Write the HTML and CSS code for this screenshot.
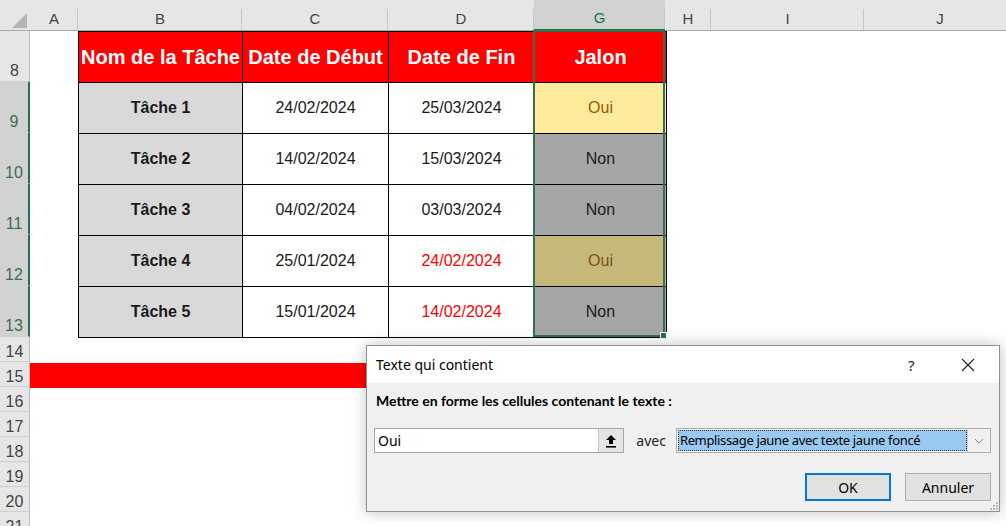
FILE: index.html
```html
<!DOCTYPE html>
<html lang="fr">
<head>
    <meta charset="UTF-8">
    <title>Texte qui contient</title>
    <link rel="stylesheet" href="styles.css">
</head>
<body>
<div class="sheet">
    <div class="colhead">
        <div class="corner">
            <svg width="30" height="31" viewBox="0 0 30 31"><polygon points="27,13 27,28 12,28" fill="#b4b4b4"/></svg>
        </div>
        <div class="ch w-a">A</div>
        <div class="ch w-b">B</div>
        <div class="ch w-c">C</div>
        <div class="ch w-d">D</div>
        <div class="ch w-g sel">G</div>
        <div class="ch w-h">H</div>
        <div class="ch w-i">I</div>
        <div class="ch w-j">J</div>
    </div>

    <div class="grid-body">
        <div class="rowhead">
            <div class="rh tall">8</div>
            <div class="rh tall sel">9</div>
            <div class="rh tall sel">10</div>
            <div class="rh tall sel">11</div>
            <div class="rh tall sel">12</div>
            <div class="rh tall sel">13</div>
            <div class="rh">14</div>
            <div class="rh">15</div>
            <div class="rh">16</div>
            <div class="rh">17</div>
            <div class="rh">18</div>
            <div class="rh">19</div>
            <div class="rh">20</div>
            <div class="rh">21</div>
        </div>

        <div class="cells">
            <table class="tasks">
                <colgroup>
                    <col class="c-b"><col class="c-c"><col class="c-d"><col class="c-g">
                </colgroup>
                <tr class="head">
                    <th>Nom de la Tâche</th>
                    <th>Date de Début</th>
                    <th>Date de Fin</th>
                    <th>Jalon</th>
                </tr>
                <tr>
                    <td class="name">Tâche 1</td>
                    <td>24/02/2024</td>
                    <td>25/03/2024</td>
                    <td class="oui">Oui</td>
                </tr>
                <tr>
                    <td class="name">Tâche 2</td>
                    <td>14/02/2024</td>
                    <td>15/03/2024</td>
                    <td class="non">Non</td>
                </tr>
                <tr>
                    <td class="name">Tâche 3</td>
                    <td>04/02/2024</td>
                    <td>03/03/2024</td>
                    <td class="non">Non</td>
                </tr>
                <tr>
                    <td class="name">Tâche 4</td>
                    <td>25/01/2024</td>
                    <td class="late">24/02/2024</td>
                    <td class="oui dim">Oui</td>
                </tr>
                <tr>
                    <td class="name">Tâche 5</td>
                    <td>15/01/2024</td>
                    <td class="late">14/02/2024</td>
                    <td class="non">Non</td>
                </tr>
            </table>
            <div class="row"></div>
            <div class="row band"></div>
            <div class="row"></div>
            <div class="row"></div>
            <div class="row"></div>
            <div class="row"></div>
            <div class="row"></div>
            <div class="row"></div>
        </div>
    </div>

    <div class="selection"><span class="handle"></span></div>

    <div class="dialog">
        <div class="titlebar">
            <span class="title">Texte qui contient</span>
            <span class="help">?</span>
            <span class="close">
                <svg width="14" height="14" viewBox="0 0 14 14"><path d="M1 1 L13 13 M13 1 L1 13" stroke="#222" stroke-width="1.1"/></svg>
            </span>
        </div>
        <div class="dlg-body">
            <div class="label">Mettre en forme les cellules contenant le texte :</div>
            <div class="field-row">
                <div class="text-input">
                    <span class="value">Oui</span>
                    <span class="pick">
                        <svg width="12" height="14" viewBox="0 0 12 14"><path d="M6 1 L11 6 L8 6 L8 10 L4 10 L4 6 L1 6 Z" fill="#000"/><rect x="1" y="12" width="10" height="1.6" fill="#000"/></svg>
                    </span>
                </div>
                <span class="avec">avec</span>
                <div class="combo">
                    <span class="combo-value">Remplissage jaune avec texte jaune foncé</span>
                    <span class="combo-btn">
                        <svg width="10" height="6" viewBox="0 0 10 6"><path d="M1 1 L5 5 L9 1" fill="none" stroke="#8a8a8a" stroke-width="1"/></svg>
                    </span>
                </div>
            </div>
            <div class="buttons">
                <button class="btn primary">OK</button>
                <button class="btn">Annuler</button>
            </div>
        </div>
        <svg class="grip" width="9" height="9" viewBox="0 0 9 9">
            <rect x="7" y="1" width="2" height="2" fill="#b8b8b8"/>
            <rect x="4" y="4" width="2" height="2" fill="#b8b8b8"/>
            <rect x="7" y="4" width="2" height="2" fill="#b8b8b8"/>
            <rect x="1" y="7" width="2" height="2" fill="#b8b8b8"/>
            <rect x="4" y="7" width="2" height="2" fill="#b8b8b8"/>
            <rect x="7" y="7" width="2" height="2" fill="#b8b8b8"/>
        </svg>
    </div>
</div>
</body>
</html>
```

FILE: styles.css
```css
body {
    margin: 0;
    background: #fff;
    font-family: "Liberation Sans", Arial, sans-serif;
    overflow: hidden;
}
.sheet {
    position: relative;
    width: 1006px;
    height: 526px;
    overflow: hidden;
}

/* column headers */
.colhead {
    display: flex;
    height: 31px;
    background: #e6e6e6;
    border-bottom: 1px solid #ababab;
    box-sizing: border-box;
}
.corner {
    width: 30px;
    flex: none;
}
.ch {
    flex: none;
    display: flex;
    align-items: flex-end;
    justify-content: center;
    padding-bottom: 3px;
    box-sizing: border-box;
    font-size: 15px;
    color: #444;
    background: linear-gradient(to left, #c6c6c6 1px, transparent 1px) bottom / 100% 21px no-repeat;
}
.ch.sel {
    background-color: #d2d2d2;
    color: #217346;
    border-bottom: 2px solid #217346;
    margin-bottom: -1px;
}
.w-a { width: 48px; }
.w-b { width: 164px; }
.w-c { width: 146px; }
.w-d { width: 146px; }
.w-g { width: 131px; }
.w-h { width: 46px; }
.w-i { width: 153px; }
.w-j { width: 152px; }

/* rows */
.grid-body {
    display: flex;
}
.rowhead {
    width: 30px;
    flex: none;
    background: #e6e6e6;
}
.rh {
    height: 25px;
    box-sizing: border-box;
    border-bottom: 1px solid #cfcfcf;
    border-right: 1px solid #bcbcbc;
    display: flex;
    align-items: flex-end;
    justify-content: center;
    line-height: 17px;
    padding-bottom: 1px;
    font-size: 16px;
    color: #444;
}
.rh.tall {
    height: 51px;
    padding-bottom: 2px;
}
.rh.sel {
    background: #d2d2d2;
    color: #3a6e4f;
    border-right: 2px solid #217346;
}
.cells {
    flex: 1;
}
.row {
    height: 25px;
}
.row.band {
    background: #ff0000;
    width: 834px;
}

/* task table */
.tasks {
    margin-left: 48px;
    border-collapse: collapse;
    table-layout: fixed;
    width: 588px;
}
.c-b { width: 164px; }
.c-c { width: 146px; }
.c-d { width: 146px; }
.c-g { width: 132px; }
.tasks th,
.tasks td {
    height: 50px;
    padding: 0;
    border: 1px solid #000;
    text-align: center;
    font-size: 16px;
    color: #1a1a1a;
    white-space: nowrap;
}
.tasks tr.head th {
    background: #ff0000;
    color: #fff;
    font-size: 20px;
    font-weight: bold;
}
.tasks td.name {
    background: #d9d9d9;
    font-weight: bold;
}
.tasks td.late {
    color: #ff0000;
}
.tasks td.oui {
    background: #ffeb9c;
    color: #9c5700;
}
.tasks td.oui.dim {
    background: #c8b77b;
    color: #7a5211;
}
.tasks td.non {
    background: #a6a6a6;
}

/* selection overlay G8:G13 */
.selection {
    position: absolute;
    left: 533px;
    top: 30px;
    width: 132px;
    height: 307px;
    border: 2px solid #2f7150;
    box-sizing: border-box;
    pointer-events: none;
}
.handle {
    position: absolute;
    right: -4px;
    bottom: -4px;
    width: 5px;
    height: 5px;
    background: #217346;
    border: 1px solid #fff;
}

/* dialog */
.dialog {
    position: absolute;
    left: 366px;
    top: 345px;
    width: 634px;
    height: 167px;
    box-sizing: border-box;
    border: 1px solid #8f8f8f;
    background: #f0f0f0;
    box-shadow: 0 0 14px rgba(0, 0, 0, 0.25);
    font-family: "Noto Sans", "Open Sans", sans-serif;
    font-size: 14px;
    color: #000;
}
.titlebar {
    height: 37px;
    background: #fff;
    display: flex;
    align-items: center;
    padding-left: 9px;
}
.title {
    flex: 1;
    font-size: 14px;
}
.help {
    width: 53px;
    font-size: 15px;
    color: #222;
}
.close {
    width: 38px;
    display: flex;
    align-items: center;
}
.dlg-body {
    padding: 8px 8px 0 7px;
}
.label {
    font-family: Lato, "Noto Sans", sans-serif;
    font-weight: bold;
    font-size: 14px;
    line-height: 19px;
    padding-left: 2px;
}
.field-row {
    display: flex;
    align-items: center;
    margin-top: 18px;
    height: 25px;
}
.text-input {
    width: 251px;
    height: 25px;
    box-sizing: border-box;
    border: 1px solid #a8a8a8;
    background: #fff;
    display: flex;
}
.value {
    flex: 1;
    padding-left: 3px;
    line-height: 23px;
}
.pick {
    width: 24px;
    background: #e5e5e5;
    border-left: 1px solid #c4c4c4;
    display: flex;
    align-items: center;
    justify-content: center;
}
.avec {
    margin-left: 12px;
    margin-right: 10px;
    color: #222;
}
.combo {
    width: 316px;
    height: 25px;
    box-sizing: border-box;
    border: 1px solid #adadad;
    background: #fff;
    display: flex;
    padding: 1px 0 1px 1px;
}
.combo-value {
    flex: 1;
    background: #99c9ef;
    border: 1px dotted #333;
    padding-left: 1px;
    font-size: 13px;
    letter-spacing: -0.35px;
    line-height: 19px;
    white-space: nowrap;
}
.combo-btn {
    width: 22px;
    margin-top: -1px;
    margin-bottom: -1px;
    border-left: 1px solid #d0d0d0;
    background: #f0f0f0;
    display: flex;
    align-items: center;
    justify-content: center;
}
.buttons {
    display: flex;
    justify-content: flex-end;
    gap: 14px;
    margin-top: 20px;
}
.btn {
    width: 86px;
    height: 28px;
    box-sizing: border-box;
    border: 1px solid #adadad;
    background: #e1e1e1;
    font-family: "Noto Sans", "Open Sans", sans-serif;
    font-size: 14px;
    color: #000;
    padding: 0;
}
.btn.primary {
    border: 2px solid #0078d7;
}
.grip {
    position: absolute;
    right: 1px;
    bottom: 1px;
}
```
